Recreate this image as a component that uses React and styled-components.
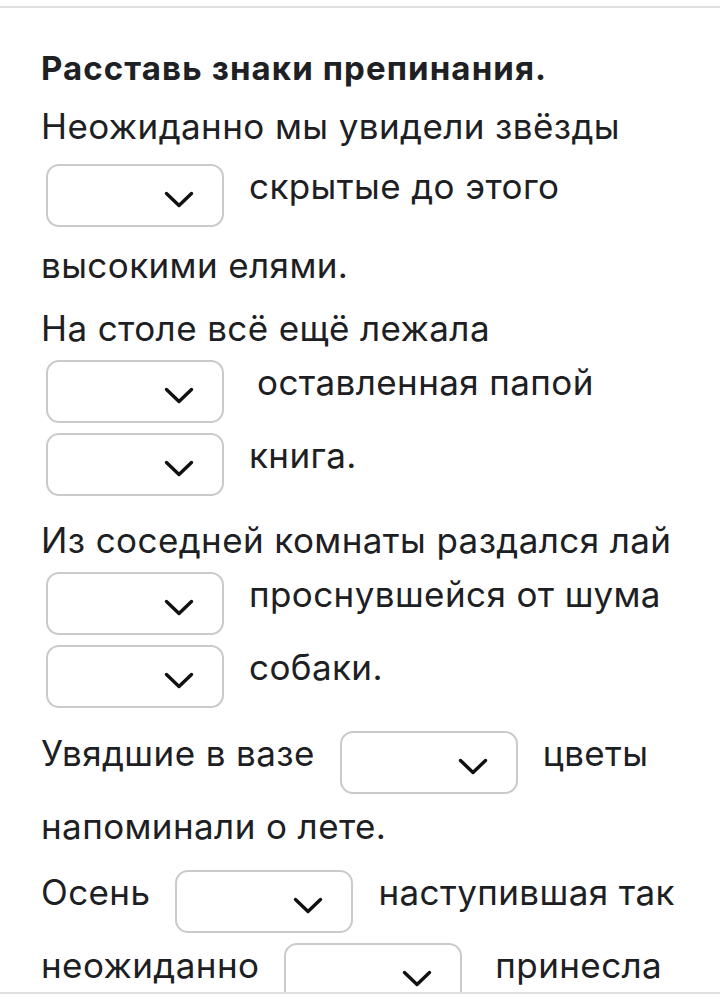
import React from "react";
import styled, { createGlobalStyle } from "styled-components";

const Global = createGlobalStyle`
  html, body { margin: 0; padding: 0; background: #ffffff; }
  body { font-family: Inter, "Noto Sans", sans-serif; color: #1d2023; }
`;

const Frame = styled.div`
  margin-top: 6px;
  height: 988px;
  box-sizing: border-box;
  border-top: 2px solid #dfdfdf;
  border-bottom: 2px solid #dfdfdf;
  overflow: hidden;
  background: #fff;
`;

const Content = styled.div`
  padding: 40px 20px 0 41px;
  display: flex;
  flex-direction: column;
`;

const Title = styled.h1`
  margin: 0 0 16px 0;
  font-family: Inter, "Noto Sans", sans-serif;
  font-weight: 700;
  font-size: 33px;
  line-height: 40px;
  letter-spacing: 1.1px;
  color: #1e2124;
`;

const Paragraph = styled.div`
  display: flex;
  flex-direction: column;
  gap: ${(p) => p.$gap}px;
  margin-bottom: ${(p) => p.$after}px;
`;

const Row = styled.div`
  display: flex;
  align-items: flex-start;
  gap: 20px;
`;

const Text = styled.span`
  font-size: 35px;
  line-height: 44px;
  letter-spacing: 0.4px;
  white-space: nowrap;
  padding-left: ${(p) => (p.$lead ? 8 : 0)}px;
`;

const SelectBox = styled.div`
  flex: none;
  width: 178px;
  height: 63px;
  margin: 0 5px;
  box-sizing: border-box;
  border: 2px solid #cacaca;
  border-radius: 13px;
  background: #fff;
  display: flex;
  align-items: center;
  justify-content: flex-end;
  padding: 7px 28px 0 0;
`;

const Chevron = () => (
  <svg width="30" height="17" viewBox="0 0 30 17" aria-hidden="true">
    <polyline
      points="2.5,2.5 15,14.5 27.5,2.5"
      fill="none"
      stroke="#111"
      strokeWidth="3.4"
      strokeLinecap="round"
      strokeLinejoin="round"
    />
  </svg>
);

const S = { select: true };

const paragraphs = [
  {
    gap: 16,
    after: 19,
    lines: [
      ["Неожиданно мы увидели звёзды"],
      [S, "скрытые до этого"],
      ["высокими елями."],
    ],
  },
  {
    gap: 10,
    after: 22,
    lines: [
      ["На столе всё ещё лежала"],
      [S, { text: "оставленная папой", lead: true }],
      [S, "книга."],
    ],
  },
  {
    gap: 10,
    after: 23,
    lines: [
      ["Из соседней комнаты раздался лай"],
      [S, "проснувшейся от шума"],
      [S, "собаки."],
    ],
  },
  {
    gap: 10,
    after: 22,
    lines: [["Увядшие в вазе", S, "цветы"], ["напоминали о лете."]],
  },
  {
    gap: 10,
    after: 0,
    lines: [
      ["Осень", S, "наступившая так"],
      ["неожиданно", S, { text: "принесла", lead: true }],
    ],
  },
];

export default function App() {
  return (
    <>
      <Global />
      <Frame>
        <Content>
          <Title>Расставь знаки препинания.</Title>
          {paragraphs.map((p, pi) => (
            <Paragraph key={pi} $gap={p.gap} $after={p.after}>
              {p.lines.map((line, li) => (
                <Row key={li}>
                  {line.map((item, ii) => {
                    if (item.select) {
                      return (
                        <SelectBox key={ii} role="combobox">
                          <Chevron />
                        </SelectBox>
                      );
                    }
                    if (typeof item === "string") {
                      return <Text key={ii}>{item}</Text>;
                    }
                    return (
                      <Text key={ii} $lead={item.lead}>
                        {item.text}
                      </Text>
                    );
                  })}
                </Row>
              ))}
            </Paragraph>
          ))}
        </Content>
      </Frame>
    </>
  );
}
